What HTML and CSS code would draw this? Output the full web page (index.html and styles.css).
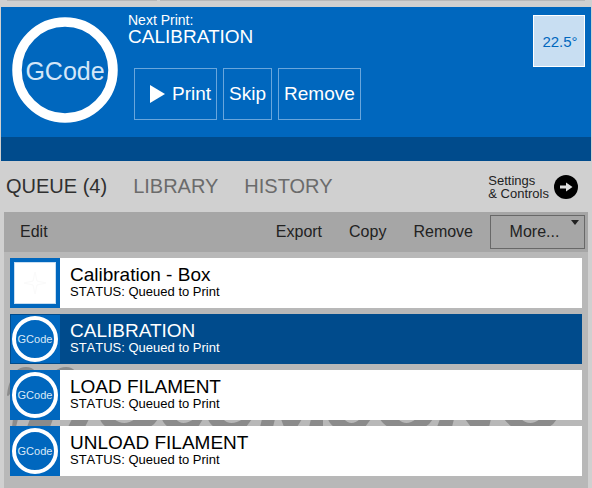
FILE: index.html
```html
<!DOCTYPE html>
<html lang="en">
<head>
<meta charset="utf-8">
<title>Print Queue</title>
<link rel="stylesheet" href="styles.css">
</head>
<body>
<div class="top-strip"><span class="strip-a"></span><span class="strip-b"></span></div>
<header class="hero">
  <div class="hero-main">
    <svg class="hero-logo" viewBox="0 0 106 106" role="img" aria-label="GCode"><circle cx="53" cy="53" r="48" fill="none" stroke="#fff" stroke-width="9.5"/><text x="53" y="63" text-anchor="middle" font-size="25" fill="#d3e6f8">GCode</text></svg>
    <div class="hero-info">
      <p class="hero-label">Next Print:</p>
      <h1 class="hero-title">CALIBRATION</h1>
      <div class="hero-actions">
        <button class="action action-print" type="button"><svg class="play" viewBox="0 0 15 18" aria-hidden="true"><path d="M0 0L15 9L0 18Z" fill="#fff"/></svg>Print</button>
        <button class="action" type="button">Skip</button>
        <button class="action" type="button">Remove</button>
      </div>
    </div>
    <button class="temp" type="button">22.5°</button>
  </div>
  <div class="hero-foot"></div>
</header>
<nav class="tabs">
  <a class="tab tab-active" href="#queue">QUEUE (4)</a>
  <a class="tab" href="#library">LIBRARY</a>
  <a class="tab" href="#history">HISTORY</a>
  <a class="settings" href="#settings"><span class="settings-text"><span>Settings</span><span>&amp; Controls</span></span><svg class="arrow" viewBox="0 0 24 24" aria-hidden="true"><circle cx="12" cy="12" r="12" fill="#000"/><path d="M6 10.5H12V7.5L18.5 12L12 16.5V13.5H6Z" fill="#e0e0e0"/></svg></a>
</nav>
<main class="panel">
  <div class="toolbar">
    <button class="tool tool-edit" type="button">Edit</button>
    <button class="tool" type="button">Export</button>
    <button class="tool" type="button">Copy</button>
    <button class="tool" type="button">Remove</button>
    <button class="tool tool-more" type="button">More...<svg class="caret" viewBox="0 0 8 5" aria-hidden="true"><path d="M0 0H8L4 5Z" fill="#222"/></svg></button>
  </div>
  <div class="queue">
    <svg class="watermark" viewBox="0 0 584 236" preserveAspectRatio="xMinYMin meet" aria-hidden="true">
      <g fill="#8b8b8b">
        <path d="M3 143Q4 133 7 128V140Q4 146 3 143ZM12 119Q16 115 22 115Q28 115 31 119ZM51 119Q56 115 62 115Q68 115 71 119Z"/>
        <path d="M9 167H14L12 175H8ZM26 167H49L46 175H23ZM68 167H85L81 175H64Z"/>
        <path d="M96 167H110Q120 175 131 167H154Q151 172 146 175H102Q97 171 96 167Z"/>
        <path d="M158 167H172Q178 175 190 167H199L194 175H164Q159 171 158 167Z"/>
        <path d="M204 167H219Q226 175 239 167H248L242 175H210Q205 171 204 167Z"/>
        <path d="M258 167H271L269 175H256ZM277 167H298L293 175H280ZM307 167H319V175H305Z"/>
        <path d="M324 167H340Q347 175 356 167H367L361 175H330Q325 171 324 167Z"/>
        <path d="M376 167H394Q402 175 412 167H429Q426 172 421 175H384Q378 171 376 167Z"/>
        <path d="M436 167H450L448 175H433ZM461 167H487L485 175H467Z"/>
        <path d="M500 167H517Q526 175 536 167H553Q550 172 545 175H508Q503 171 500 167Z"/>
      </g>
    </svg>
    <ul class="items">
      <li class="item">
        <svg class="thumb" viewBox="0 0 50 50" aria-hidden="true"><rect width="50" height="50" fill="#0067be"/><rect x="4.5" y="4.5" width="41" height="41" fill="#fff" stroke="#c8def2"/><path d="M25 14L27 23L36 25L27 27L25 36L23 27L14 25L23 23Z" fill="none" stroke="#fafafa"/></svg>
        <div class="item-text"><h2 class="item-title">Calibration - Box</h2><p class="item-status">STATUS: Queued to Print</p></div>
      </li>
      <li class="item item-selected">
        <svg class="thumb" viewBox="0 0 50 50" aria-hidden="true"><rect width="50" height="50" fill="#004b8c"/><rect x="1" y="1" width="49" height="48" fill="#0067be"/><circle cx="25" cy="25" r="21" fill="none" stroke="#fff" stroke-width="4"/><text x="25" y="29" text-anchor="middle" font-size="11" fill="#d8e9f8">GCode</text></svg>
        <div class="item-text"><h2 class="item-title">CALIBRATION</h2><p class="item-status">STATUS: Queued to Print</p></div>
      </li>
      <li class="item">
        <svg class="thumb" viewBox="0 0 50 50" aria-hidden="true"><rect width="50" height="50" fill="#0067be"/><circle cx="25" cy="25" r="21" fill="none" stroke="#fff" stroke-width="4"/><text x="25" y="29" text-anchor="middle" font-size="11" fill="#d8e9f8">GCode</text></svg>
        <div class="item-text"><h2 class="item-title">LOAD FILAMENT</h2><p class="item-status">STATUS: Queued to Print</p></div>
      </li>
      <li class="item">
        <svg class="thumb" viewBox="0 0 50 50" aria-hidden="true"><rect width="50" height="50" fill="#0067be"/><circle cx="25" cy="25" r="21" fill="none" stroke="#fff" stroke-width="4"/><text x="25" y="29" text-anchor="middle" font-size="11" fill="#d8e9f8">GCode</text></svg>
        <div class="item-text"><h2 class="item-title">UNLOAD FILAMENT</h2><p class="item-status">STATUS: Queued to Print</p></div>
      </li>
    </ul>
  </div>
</main>
</body>
</html>
```
FILE: styles.css
```css
* { box-sizing: border-box; }
body {
  margin: 0;
  min-height: 100vh;
  display: flex;
  flex-direction: column;
  background: #d0d0d0;
  font-family: "Liberation Sans", Arial, sans-serif;
}
h1, h2, p, ul { margin: 0; padding: 0; font-weight: 400; }
button { font: inherit; background: none; border: 0; margin: 0; padding: 0; }
a { text-decoration: none; }
svg { display: block; flex: none; }

.top-strip { display: flex; gap: 3px; height: 7px; padding: 0 7px; }
.top-strip span { height: 1px; background: #b8b8b8; }
.strip-a { flex: 150; }
.strip-b { flex: 425; }

.hero { margin: 0 1px; background: #0067be; color: #fff; }
.hero-main { display: flex; align-items: flex-start; padding: 0 6px 0 11px; height: 130px; }
.hero-logo { width: 106px; height: 106px; margin-top: 10px; }
.hero-info { flex: 1; padding: 5px 0 0 10px; }
.hero-label { font-size: 14px; line-height: 16px; font-kerning: none; }
.hero-title { font-size: 19px; line-height: 18px; }
.hero-actions { display: flex; gap: 6px; padding: 22px 0 0 6px; }
.action {
  height: 52px;
  padding: 0 5px;
  display: flex;
  align-items: center;
  border: 1px solid #69a6dc;
  color: #fff;
  font-size: 19px;
}
.action-print { padding-left: 15px; }
.play { width: 15px; height: 18px; margin-right: 7px; }
.temp {
  width: 52px;
  height: 52px;
  margin-top: 8px;
  padding-left: 2px;
  border: 1px solid #fff;
  background: #c8def2;
  color: #0067be;
  font-size: 15px;
}
.hero-foot { height: 24px; background: #004b8c; }

.tabs { display: flex; align-items: center; height: 51px; padding: 0 14px 0 6px; gap: 26px; }
.tab { font-size: 20px; color: #6b6b6b; }
.tab-active { color: #303030; }
.settings {
  margin-left: auto;
  display: flex;
  align-items: center;
  gap: 5px;
  color: #222;
}
.settings-text { display: grid; font-size: 13px; line-height: 13px; font-kerning: none; }
.arrow { width: 24px; height: 24px; }

.panel { flex: 1; margin: 0 4px; background: #b8b8b8; display: flex; flex-direction: column; }
.toolbar { display: flex; align-items: center; height: 40px; padding: 0 3px 0 16px; gap: 27px; background: #a6a6a6; }
.tool { font-size: 16px; color: #222; }
.tool-edit { margin-right: auto; }
.tool-more {
  position: relative;
  height: 34px;
  width: 95px;
  margin-left: -10px;
  padding-right: 6px;
  border: 1px solid #686868;
}
.caret { position: absolute; top: 4px; right: 5px; width: 8px; height: 5px; }

.queue { position: relative; flex: 1; padding: 6px; }
.watermark { position: absolute; top: 0; left: 0; width: 100%; height: 236px; }
.items { position: relative; display: grid; gap: 6px; list-style: none; }
.item { display: flex; height: 50px; background: #fff; color: #000; }
.item-selected { background: #004b8c; color: #fff; }
.thumb { width: 50px; height: 50px; }
.item-text { padding: 8px 10px 0; }
.item-title { font-size: 19px; line-height: 18px; }
.item-status { font-size: 13px; line-height: 16px; font-kerning: none; }
```
